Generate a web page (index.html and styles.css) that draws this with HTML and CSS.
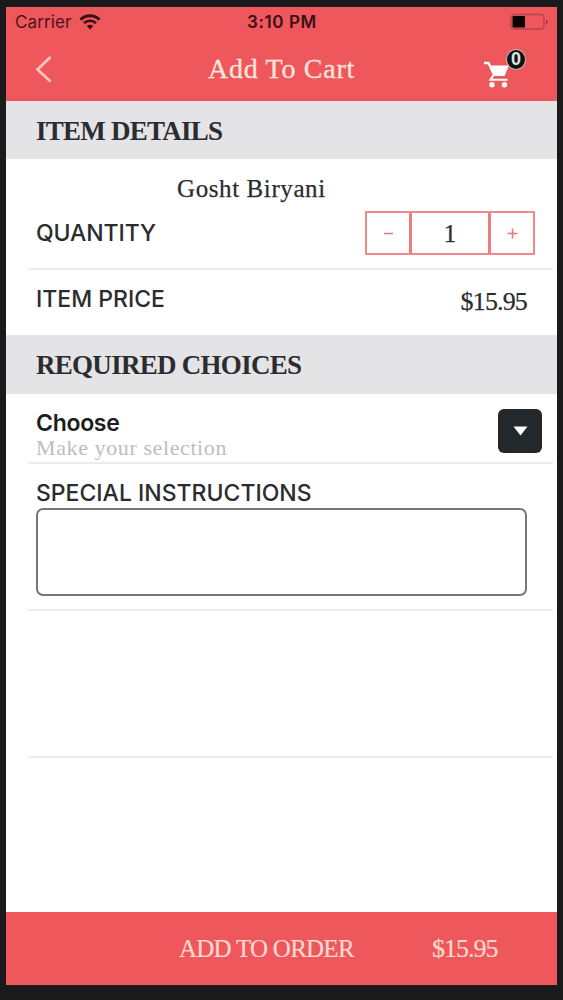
FILE: index.html
```html
<!DOCTYPE html>
<html lang="en">
<head>
    <meta charset="UTF-8">
    <meta name="viewport" content="width=device-width, initial-scale=1.0">
    <title>Add To Cart</title>
    <link rel="stylesheet" href="styles.css">
</head>
<body>
    <div class="screen">
        <header class="header">
            <div class="status-bar">
                <div class="carrier">
                    <span>Carrier</span>
                    <svg class="wifi" width="22" height="16" viewBox="0 0 22 16">
                        <path d="M1.5 5.6a13.5 13.5 0 0 1 19 0" fill="none" stroke="#3a1014" stroke-width="2.9"/>
                        <path d="M5 9.2a8.5 8.5 0 0 1 12 0" fill="none" stroke="#3a1014" stroke-width="2.6"/>
                        <path d="M7.8 12a4.6 4.6 0 0 1 6.4 0L11 15.4z" fill="#3a1014"/>
                    </svg>
                </div>
                <span class="time">3:10 PM</span>
                <svg class="battery" width="39" height="18" viewBox="0 0 39 18">
                    <rect x="1" y="1.5" width="33" height="14.5" rx="3" fill="none" stroke="#b8434a" stroke-width="1.3"/>
                    <rect x="2.5" y="3" width="12.5" height="11.5" rx="1" fill="#080203"/>
                    <path d="M36 6.5v4.5q2-.8 2-2.25T36 6.5z" fill="#a8373d"/>
                </svg>
            </div>
            <div class="nav">
                <button class="back" aria-label="Back">
                    <svg width="18" height="28" viewBox="0 0 18 28">
                        <path d="M15.500 2L2.500 14.500L15.500 26.500" fill="none" stroke="#fbc9c0" stroke-width="2.6"/>
                    </svg>
                </button>
                <h1 class="title">Add To Cart</h1>
                <button class="cart" aria-label="Cart">
                    <svg width="26" height="27" viewBox="0 0 26 27">
                        <path d="M0 2h4.500l6 12.500" fill="none" stroke="#fff" stroke-width="2.4"/>
                        <path d="M5 4.500H25l-4.500 10.500H10z" fill="#fff"/>
                        <path d="M9.500 14l-3 4.700h17" fill="none" stroke="#fff" stroke-width="2.1"/>
                        <circle cx="8" cy="23.800" r="2.700" fill="#fff"/>
                        <circle cx="20.500" cy="23.800" r="2.700" fill="#fff"/>
                    </svg>
                    <span class="badge">0</span>
                </button>
            </div>
        </header>

        <main class="content">
            <h2 class="section item-details">ITEM DETAILS</h2>
            <div class="row quantity-row">
                <p class="item-name">Gosht Biryani</p>
                <div class="quantity">
                    <span class="label quantity-label">QUANTITY</span>
                    <div class="stepper">
                        <button class="step"><svg width="11" height="11" viewBox="0 0 11 11"><path d="M1 5.500h9" stroke="#ee7470" stroke-width="1.500"/></svg></button>
                        <span class="count">1</span>
                        <button class="step"><svg width="11" height="11" viewBox="0 0 11 11"><path d="M.5 5.500h10M5.500 .5v10" stroke="#ee7470" stroke-width="1.500"/></svg></button>
                    </div>
                </div>
            </div>
            <div class="row price-row">
                <span class="label price-label">ITEM PRICE</span>
                <span class="price">$15.95</span>
            </div>

            <h2 class="section required">REQUIRED CHOICES</h2>
            <div class="row choice-row">
                <div class="choice">
                    <div class="choose">Choose</div>
                    <div class="hint">Make your selection</div>
                </div>
                <button class="dropdown" aria-label="Select">
                    <svg width="15" height="10" viewBox="0 0 15 10"><path d="M.5 .5h14L7.500 9.500z" fill="#fff"/></svg>
                </button>
            </div>
            <div class="row notes-row">
                <label class="label notes-label" for="notes">SPECIAL INSTRUCTIONS</label>
                <textarea class="notes" id="notes"></textarea>
            </div>
            <div class="row empty-row"></div>
        </main>

        <footer class="footer">
            <span class="add">ADD TO ORDER</span>
            <span class="total">$15.95</span>
        </footer>
    </div>
</body>
</html>
```
FILE: styles.css
```css
* {
    box-sizing: border-box;
}
body {
    margin: 0;
    height: 1000px;
    padding: 7px 6px 15px;
    background-color: #1a1a1a;
    font-family: "Liberation Serif", serif;
    color: #2b2c2f;
    overflow: hidden;
}
h1, h2, p {
    margin: 0;
}
button {
    padding: 0;
    border: none;
    background: none;
    display: flex;
    align-items: center;
    justify-content: center;
}
svg {
    display: block;
}
.screen {
    display: flex;
    flex-direction: column;
    width: 551px;
    height: 978px;
    background-color: #fff;
}

/* Header */
.header {
    height: 94px;
    background-color: #ee575b;
}
.status-bar {
    display: grid;
    grid-template-columns: 1fr auto 1fr;
    align-items: center;
    height: 30px;
    padding: 0 8px 0 9px;
    font-family: Inter, sans-serif;
    font-size: 17px;
    color: #4a151a;
}
.carrier {
    display: flex;
    align-items: center;
    gap: 8px;
    letter-spacing: 0.1px;
}
.time {
    font-weight: 600;
    letter-spacing: 0.6px;
    color: #3a1014;
}
.battery {
    justify-self: end;
}
.nav {
    display: grid;
    grid-template-columns: 90px 1fr 90px;
    align-items: center;
    height: 64px;
}
.back {
    justify-self: start;
    margin-left: 29px;
}
.title {
    text-align: center;
    font-size: 28px;
    font-weight: normal;
    letter-spacing: 0.7px;
    color: #ffe4dc;
    -webkit-text-stroke: 0.3px #ffe4dc;
}
.cart {
    position: relative;
    justify-self: start;
    margin: 11px 0 0 17px;
}
.badge {
    position: absolute;
    left: 22px;
    top: -12px;
    width: 20px;
    height: 21px;
    border: 1px solid #c9b4b4;
    border-radius: 50%;
    background-color: #101314;
    color: #dfe3e3;
    font-size: 18px;
    font-weight: bold;
    line-height: 19px;
    text-align: center;
}

/* Content */
.content {
    flex: 1;
}
.section {
    height: 58px;
    padding-left: 30px;
    background-color: #e4e4e6;
    font-size: 27px;
    line-height: 60px;
}
.item-details {
    letter-spacing: -0.75px;
}
.required {
    height: 59px;
    line-height: 61px;
    letter-spacing: -0.72px;
}
.row {
    margin: 0 4px 0 22px;
    padding-left: 8px;
    border-bottom: 2px solid #ececee;
}
.label {
    font-family: Inter, sans-serif;
    font-size: 23px;
    font-weight: 500;
    line-height: 28px;
}
.quantity-label {
    letter-spacing: -0.1px;
}
.quantity-row {
    height: 111px;
    padding-top: 16px;
}
.item-name {
    padding-left: 141px;
    font-size: 25px;
    line-height: 28px;
    letter-spacing: 0.6px;
    -webkit-text-stroke: 0.25px #2b2c2f;
}
.quantity {
    display: flex;
    align-items: center;
    justify-content: space-between;
    margin-top: 8px;
    padding-right: 18px;
}
.stepper {
    display: flex;
    width: 170px;
    height: 44px;
    border: 2px solid #f08a8a;
}
.step {
    width: 42px;
}
.count {
    flex: 1;
    border: solid #ee7c7c;
    border-width: 0 3px;
    font-size: 25px;
    line-height: 41px;
    text-align: center;
    -webkit-text-stroke: 0.25px #2b2c2f;
}
.price-row {
    display: flex;
    justify-content: space-between;
    height: 65px;
    padding: 15px 26px 0 8px;
    border: none;
}
.price {
    font-size: 26px;
    line-height: 34px;
    letter-spacing: -0.85px;
    -webkit-text-stroke: 0.25px #2b2c2f;
}
.choice-row {
    display: flex;
    justify-content: space-between;
    height: 70px;
    padding: 15px 11px 0 8px;
}
.choose {
    font-family: Inter, sans-serif;
    font-size: 23px;
    font-weight: 600;
    line-height: 29px;
    letter-spacing: -0.3px;
    color: #1c1d20;
}
.hint {
    font-size: 22px;
    line-height: 20px;
    letter-spacing: 0.6px;
    color: #bdbdc0;
}
.dropdown {
    width: 44px;
    height: 44px;
    border-radius: 6px;
    background-color: #22282b;
}
.notes-row {
    height: 147px;
    padding-top: 15px;
}
.notes-label {
    display: block;
}
.notes {
    display: block;
    width: 491px;
    height: 88px;
    margin-top: 1px;
    border: 2px solid #77777a;
    border-radius: 7px;
    background-color: #fff;
    resize: none;
}
.empty-row {
    height: 147px;
}

/* Footer */
.footer {
    display: flex;
    height: 73px;
    padding-left: 173px;
    background-color: #ee575b;
    font-size: 25px;
    line-height: 74px;
    color: #ffd9d0;
    -webkit-text-stroke: 0.2px #ffd9d0;
}
.add {
    width: 253px;
    letter-spacing: -0.75px;
}
.total {
    font-size: 26px;
    letter-spacing: -1px;
}
```
